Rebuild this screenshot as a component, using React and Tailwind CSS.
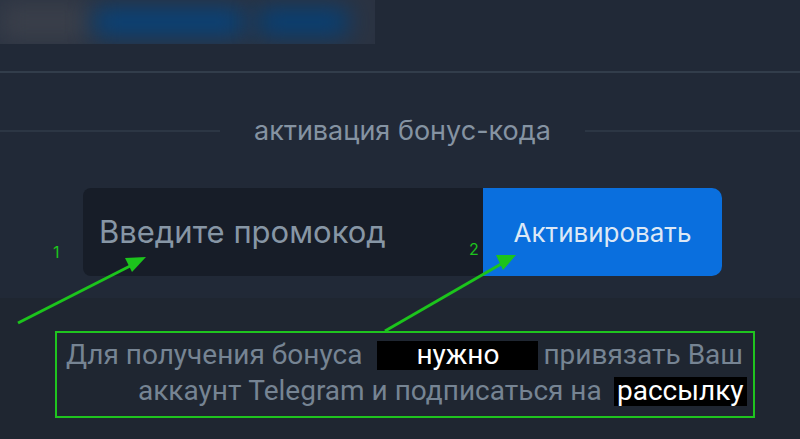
import React from "react";

const Arrows = () => (
  <svg className="absolute inset-0 pointer-events-none" width="800" height="439" viewBox="0 0 800 439">
    <line x1="18" y1="323" x2="138" y2="262" stroke="#1cc41c" strokeWidth="3" />
    <path d="M125,258 L146,257 L132,272 Z" fill="#1cc41c" />
    <line x1="385" y1="331" x2="508" y2="260" stroke="#1cc41c" strokeWidth="3" />
    <path d="M496,255 L516,255 L503,270 Z" fill="#1cc41c" />
  </svg>
);

export default function App() {
  return (
    <div
      className="relative w-[800px] h-[439px] overflow-hidden bg-[#212937]"
      style={{ fontFamily: "Inter, 'Noto Sans', sans-serif" }}
    >
      {/* blurred header strip */}
      <div className="h-[44px] w-[375px] bg-[#2b3342] flex items-center overflow-hidden">
        <div className="w-[90px] h-[40px] bg-[#3a3f4a] blur-md" />
        <div className="ml-[4px] w-[150px] h-[26px] bg-[#04447f] blur-md rounded" />
        <div className="ml-[14px] w-[90px] h-[26px] bg-[#03417a] blur-md rounded" />
      </div>

      <div className="mt-[27px] h-[2px] bg-[#323d4b]" />

      {/* section title */}
      <div className="mt-[42px] flex items-center h-[32px]">
        <div className="w-[220px] h-[2px] bg-[#2c3644]" />
        <div className="flex-1 text-center text-[27px] leading-[32px] text-[#8593a2]">активация бонус-кода</div>
        <div className="w-[215px] h-[2px] bg-[#2c3644]" />
      </div>

      {/* promo form */}
      <div className="mt-[41px] ml-[83px] flex h-[88px] w-[639px]">
        <div className="w-[400px] rounded-l-lg bg-[#171d28] flex items-center pl-[16px] text-[31px] text-[#8796a5]">
          Введите промокод
        </div>
        <button className="flex-1 rounded-r-[10px] bg-[#0a6fde] text-[26px] text-[#dce8f6] flex items-center justify-center">
          Активировать
        </button>
      </div>

      {/* lower band */}
      <div className="mt-[22px] h-[141px] bg-[#1f2631] pt-[33px] pl-[55px]">
        <div
          className="w-[700px] h-[87px] border-2 border-[#1fc41f] text-[28px] text-[#768493] pt-[4px]"
          style={{ fontFamily: "Roboto, 'Liberation Sans', sans-serif" }}
        >
          <div className="flex items-center h-[36px] pl-[9px]">
            <span>Для получения бонуса</span>
            <span className="ml-[15px] w-[161px] h-[29px] bg-black text-white flex items-center justify-center">нужно</span>
            <span className="ml-[5px]">привязать Ваш</span>
          </div>
          <div className="flex items-center h-[36px] pl-[81px]">
            <span>аккаунт Telegram и подписаться на</span>
            <span className="ml-[12px] w-[133px] h-[29px] bg-black text-white flex items-center justify-center">рассылку</span>
          </div>
        </div>
      </div>

      {/* annotations */}
      <span className="absolute left-[53px] top-[240px] text-[16px] text-[#1cc41c]">1</span>
      <span className="absolute left-[469px] top-[237px] text-[16px] text-[#1cc41c]">2</span>
      <Arrows />
    </div>
  );
}
